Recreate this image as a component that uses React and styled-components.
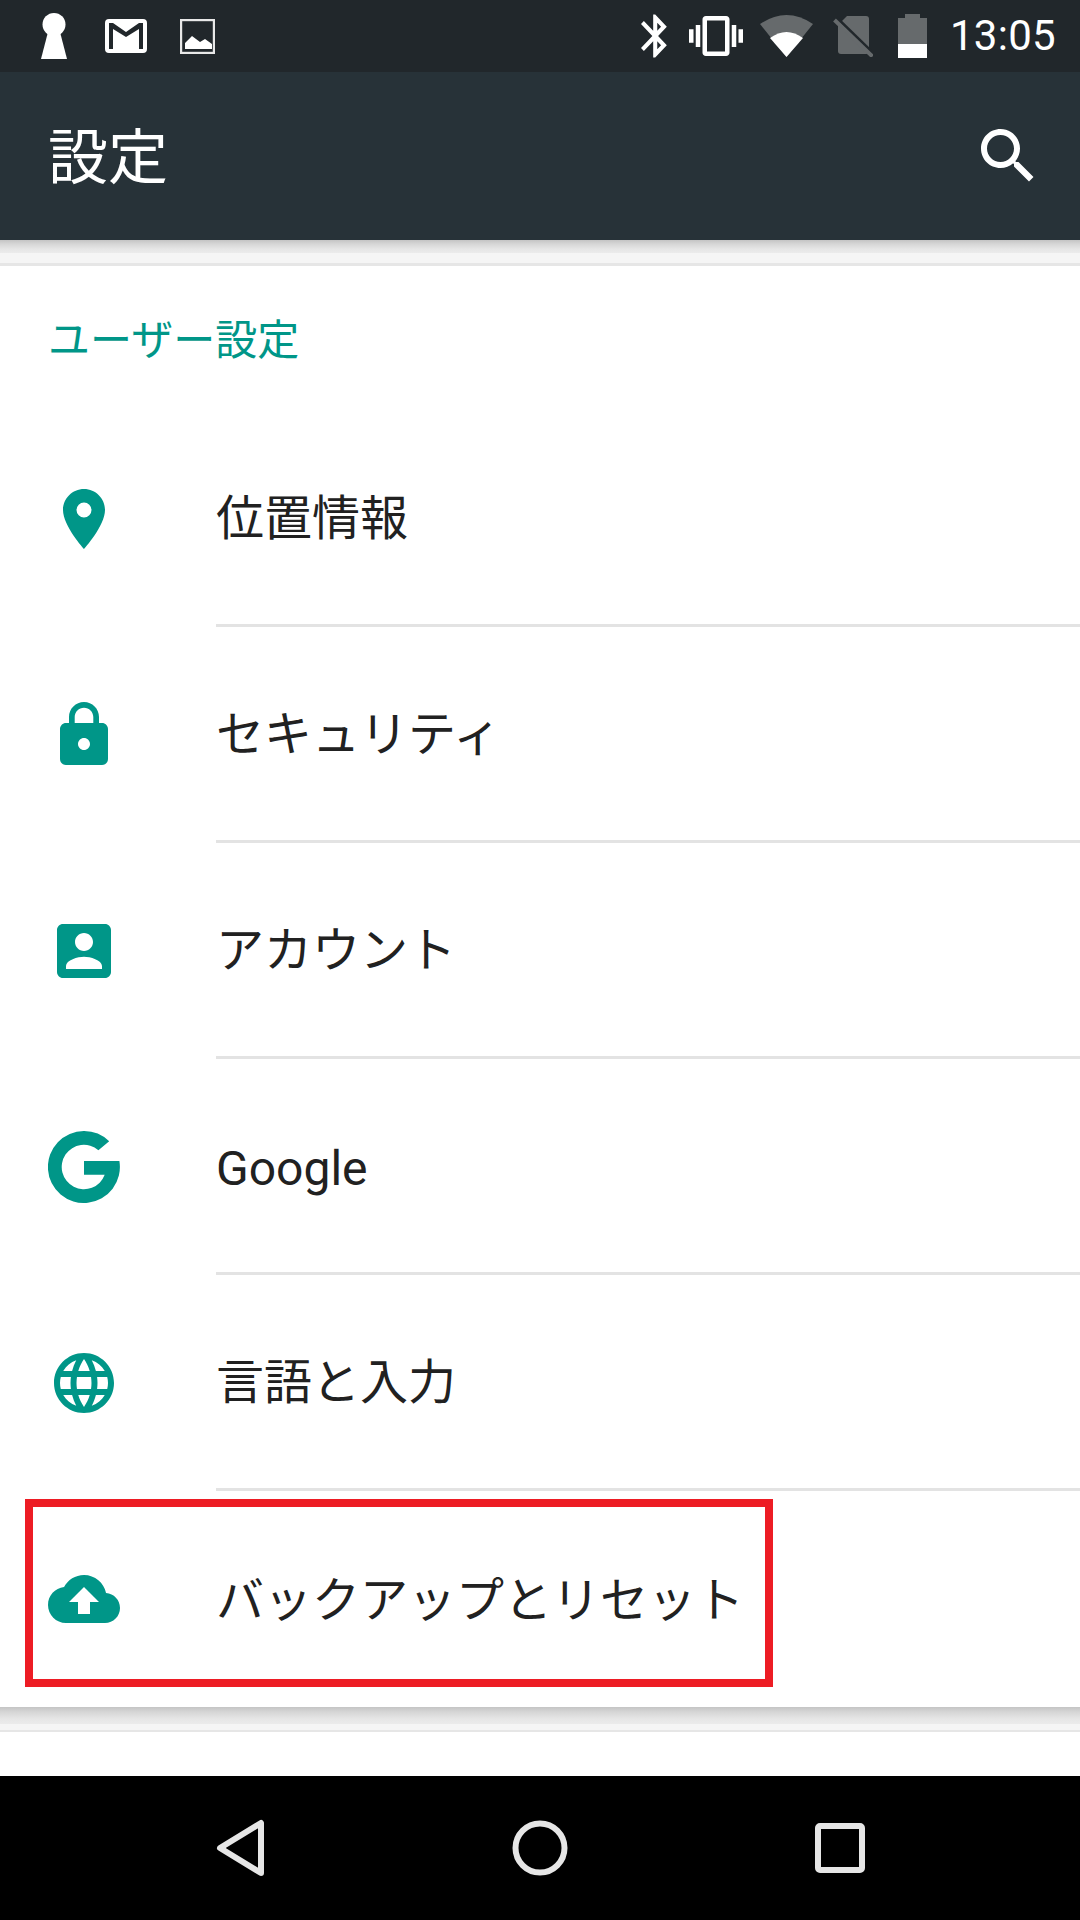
import React from "react";
import styled, { createGlobalStyle } from "styled-components";

const Global = createGlobalStyle`
  html, body { margin: 0; padding: 0; background: #fff; }
  #root { width: 1080px; height: 1920px; }
`;

const CJK = `"Noto Sans CJK JP", "Roboto", sans-serif`;
const TEAL = "#009688";

const Screen = styled.div`
  width: 1080px;
  height: 1920px;
  display: flex;
  flex-direction: column;
  background: #fff;
  overflow: hidden;
  position: relative;
  font-family: ${CJK};
`;

const StatusBar = styled.header`
  height: 72px;
  flex: none;
  background: #21272b;
  display: flex;
  align-items: center;
  justify-content: space-between;
  padding: 0 24px 0 41px;
`;

const StatusGroup = styled.div`
  display: flex;
  align-items: center;
`;

const StatusIcon = styled.svg`
  display: block;
  flex: none;
  margin-left: ${(p) => p.$gap || 0}px;
`;

const Clock = styled.span`
  margin-left: 23px;
  font: 400 42px/72px Roboto, sans-serif;
  letter-spacing: 0.3px;
  color: #fff;
`;

const AppBar = styled.div`
  height: 168px;
  flex: none;
  background: #273238;
  display: flex;
  align-items: center;
  justify-content: space-between;
  padding: 0 36px 0 48px;
`;

const Title = styled.h1`
  margin: 0 0 6px;
  font: 400 60px/1 ${CJK};
  color: #fff;
`;

const SearchIcon = styled.svg`
  display: block;
  width: 72px;
  height: 72px;
  fill: #fff;
`;

const ShadowBand = styled.div`
  flex: none;
  height: ${(p) => p.$height}px;
  background: linear-gradient(#c4c4c4 0, #d6d6d6 30%, #e6e6e6 70%, #ebebeb 100%) top / 100% ${(p) => p.$shadow}px no-repeat, #f5f5f5;
  border-bottom: ${(p) => p.$line}px solid #e6e6e6;
`;

const Card = styled.section`
  flex: none;
  background: #fff;
`;

const SectionTitle = styled.h2`
  margin: 0;
  height: 145px;
  padding: 47px 0 0 48px;
  box-sizing: border-box;
  font: 400 42px/48px ${CJK};
  color: ${TEAL};
`;

const Row = styled.div`
  height: 216px;
  display: flex;
  align-items: stretch;
  padding-left: 48px;
`;

const RowIcon = styled.svg`
  display: block;
  flex: none;
  width: 72px;
  height: 72px;
  margin: 72px 96px 0 0;
  fill: ${TEAL};
`;

const RowBody = styled.div`
  flex: 1;
  display: flex;
  align-items: center;
  font: 400 48px/1 ${(p) => (p.$latin ? "Roboto, sans-serif" : CJK)};
  color: #212121;
  box-sizing: border-box;
  padding: ${(p) => (p.$latin ? "6px 0 0" : "0 0 7px")};
  border-bottom: ${(p) => (p.$last ? "0" : "3px solid #e3e3e3")};
`;

const Filler = styled.div`
  flex: 1;
  background: #fff;
`;

const NavBar = styled.nav`
  height: 144px;
  flex: none;
  background: #000;
  display: flex;
  align-items: center;
  justify-content: space-between;
  padding: 0 205px;
`;

const NavIcon = styled.svg`
  display: block;
  width: 72px;
  height: 72px;
  fill: none;
  stroke: #e6e6e6;
  stroke-width: 6;
  stroke-linejoin: round;
`;

const Highlight = styled.div`
  position: absolute;
  left: 25px;
  top: 1499px;
  width: 748px;
  height: 188px;
  box-sizing: border-box;
  border: 8px solid #ed1c24;
  pointer-events: none;
`;

const rows = [
  { label: "位置情報", d: "M12 2C8.13 2 5 5.13 5 9c0 5.25 7 13 7 13s7-7.75 7-13c0-3.87-3.13-7-7-7zm0 9.5a2.5 2.5 0 0 1 0-5 2.5 2.5 0 0 1 0 5z" },
  { label: "セキュリティ", d: "M18 8h-1V6c0-2.76-2.24-5-5-5S7 3.24 7 6v2H6c-1.1 0-2 .9-2 2v10c0 1.1.9 2 2 2h12c1.1 0 2-.9 2-2V10c0-1.1-.9-2-2-2zm-6 9c-1.1 0-2-.9-2-2s.9-2 2-2 2 .9 2 2-.9 2-2 2zm3.1-9H8.9V6c0-1.71 1.39-3.1 3.1-3.1 1.71 0 3.1 1.39 3.1 3.1v2z" },
  { label: "アカウント", d: "M3 5v14c0 1.1.89 2 2 2h14c1.1 0 2-.9 2-2V5c0-1.1-.9-2-2-2H5c-1.11 0-2 .9-2 2zm12 4c0 1.66-1.34 3-3 3s-3-1.34-3-3 1.34-3 3-3 3 1.34 3 3zm-9 8c0-2 4-3.1 6-3.1s6 1.1 6 3.1v1H6v-1z" },
  { label: "Google", latin: true, d: "M12 0a12 12 0 0 1 8.4 3.4L16.8 6.4A7.4 7.4 0 1 0 18.9 14.6H12V10H23.8A12 12 0 1 1 12 0z" },
  { label: "言語と入力", d: "M11.99 2C6.47 2 2 6.48 2 12s4.47 10 9.99 10C17.52 22 22 17.52 22 12S17.52 2 11.99 2zm6.93 6h-2.95c-.32-1.25-.78-2.45-1.38-3.56 1.84.63 3.37 1.91 4.33 3.56zM12 4.04c.83 1.2 1.48 2.53 1.91 3.96h-3.82c.43-1.43 1.08-2.76 1.91-3.96zM4.26 14C4.1 13.36 4 12.69 4 12s.1-1.36.26-2h3.38c-.08.66-.14 1.32-.14 2 0 .68.06 1.34.14 2H4.26zm.82 2h2.95c.32 1.25.78 2.45 1.38 3.56-1.84-.63-3.37-1.9-4.33-3.56zm2.95-8H5.08c.96-1.66 2.49-2.93 4.33-3.56C8.81 5.55 8.35 6.75 8.03 8zM12 19.96c-.83-1.2-1.48-2.53-1.91-3.96h3.82c-.43 1.43-1.08 2.76-1.91 3.96zM14.34 14H9.66c-.09-.66-.16-1.32-.16-2 0-.68.07-1.35.16-2h4.68c.09.65.16 1.32.16 2 0 .68-.07 1.34-.16 2zm.25 5.56c.6-1.11 1.06-2.31 1.38-3.56h2.95c-.96 1.65-2.49 2.93-4.33 3.56zM16.36 14c.08-.66.14-1.32.14-2 0-.68-.06-1.34-.14-2h3.38c.16.64.26 1.31.26 2s-.1 1.36-.26 2h-3.38z" },
  { label: "バックアップとリセット", d: "M19.35 10.04C18.67 6.59 15.64 4 12 4 9.11 4 6.6 5.64 5.35 8.04 2.34 8.36 0 10.91 0 14c0 3.31 2.69 6 6 6h13c2.76 0 5-2.24 5-5 0-2.64-2.05-4.78-4.65-4.96zM14 13v4h-4v-4H7l5-5 5 5h-3z" },
];

export default function App() {
  return (
    <Screen>
      <Global />
      <StatusBar>
        <StatusGroup>
          <StatusIcon width="26" height="46" viewBox="0 0 26 46" fill="#fff">
            <circle cx="13" cy="11.5" r="11.5" />
            <path d="M7 19h12l7 27H0z" />
          </StatusIcon>
          <StatusIcon $gap={38} width="42" height="34" viewBox="0 0 42 34">
            <path fill="#fff" fillRule="evenodd" d="M4 0h34a4 4 0 0 1 4 4v26a4 4 0 0 1-4 4H4a4 4 0 0 1-4-4V4a4 4 0 0 1 4-4zM8 30V10l13 8 13-8v20h4V4h-4L21 13 8 4H4v26z" />
          </StatusIcon>
          <StatusIcon $gap={33} width="35" height="35" viewBox="0 0 35 35">
            <rect x="1" y="1" width="33" height="33" fill="none" stroke="#e8e8e8" strokeWidth="2.4" />
            <path fill="#fff" d="M5 30V24l7-7 8 6 5-3 7 5v5z" />
          </StatusIcon>
        </StatusGroup>
        <StatusGroup>
          <StatusIcon width="26" height="44" viewBox="5 1.8 12.8 20.4" fill="#fff" preserveAspectRatio="none">
            <path d="M17.71 7.71L12 2h-1v7.59L6.41 5 5 6.41 10.59 12 5 17.59 6.41 19 11 14.41V22h1l5.71-5.71-4.3-4.29 4.3-4.29zM13 5.83l1.88 1.88L13 9.59V5.83zm1.88 10.46L13 18.17v-3.76l1.88 1.88z" />
          </StatusIcon>
          <StatusIcon $gap={22} width="54" height="40" viewBox="0 3 24 18" fill="#fff" preserveAspectRatio="none">
            <path d="M0 15h2V9H0v6zm3 2h2V7H3v10zm19-8v6h2V9h-2zm-3 8h2V7h-2v10zM16.5 3h-9C6.67 3 6 3.67 6 4.5v15c0 .83.67 1.5 1.5 1.5h9c.83 0 1.5-.67 1.5-1.5v-15c0-.83-.67-1.5-1.5-1.5zM16 19H8V5h8v14z" />
          </StatusIcon>
          <StatusIcon $gap={17} width="53" height="42" viewBox="0 0 53 42">
            <path fill="#666a6c" d="M0 9Q26.5-9 53 9L26.5 42z" />
            <path fill="#fff" d="M10 23Q26.5 11 43 23L26.5 42z" />
          </StatusIcon>
          <StatusIcon $gap={20} width="40" height="42" viewBox="0 0 40 42">
            <path fill="#666a6c" d="M14 1h19a3 3 0 0 1 3 3v32a3 3 0 0 1-3 3H8a3 3 0 0 1-3-3V10z" />
            <path stroke="#21272b" strokeWidth="3" d="M3.5 2.5l38 37" />
            <path stroke="#666a6c" strokeWidth="4" d="M1.5 5l38 36.5" />
          </StatusIcon>
          <StatusIcon $gap={25} width="29" height="44" viewBox="0 0 29 44">
            <path fill="#666a6c" d="M7 0h15v4h7v26H0V4h7z" />
            <rect y="30" width="29" height="14" fill="#fff" />
          </StatusIcon>
          <Clock>13:05</Clock>
        </StatusGroup>
      </StatusBar>

      <AppBar>
        <Title>設定</Title>
        <SearchIcon viewBox="0 0 24 24">
          <path d="M15.5 14h-.79l-.28-.27C15.41 12.59 16 11.11 16 9.5 16 5.91 13.09 3 9.5 3S3 5.91 3 9.5 5.91 16 9.5 16c1.61 0 3.09-.59 4.23-1.57l.27.28v.79l5 4.99L20.49 19l-4.99-5zm-6 0C7.01 14 5 11.99 5 9.5S7.01 5 9.5 5 14 7.01 14 9.5 11.99 14 9.5 14z" />
        </SearchIcon>
      </AppBar>
      <ShadowBand $height={23} $shadow={13} $line={3} />

      <Card>
        <SectionTitle>ユーザー設定</SectionTitle>
        {rows.map((r, i) => (
          <Row key={r.label}>
            <RowIcon viewBox="0 0 24 24">
              <path d={r.d} />
            </RowIcon>
            <RowBody $last={i === rows.length - 1} $latin={r.latin}>{r.label}</RowBody>
          </Row>
        ))}
      </Card>
      <ShadowBand $height={23} $shadow={17} $line={2} />
      <Filler />

      <NavBar>
        <NavIcon viewBox="0 0 72 72">
          <path d="M15 36L56 11V61z" />
        </NavIcon>
        <NavIcon viewBox="0 0 72 72">
          <circle cx="36" cy="36" r="24.5" />
        </NavIcon>
        <NavIcon viewBox="0 0 72 72">
          <rect x="15" y="14" width="44" height="44" rx="2" />
        </NavIcon>
      </NavBar>
      <Highlight />
    </Screen>
  );
}
